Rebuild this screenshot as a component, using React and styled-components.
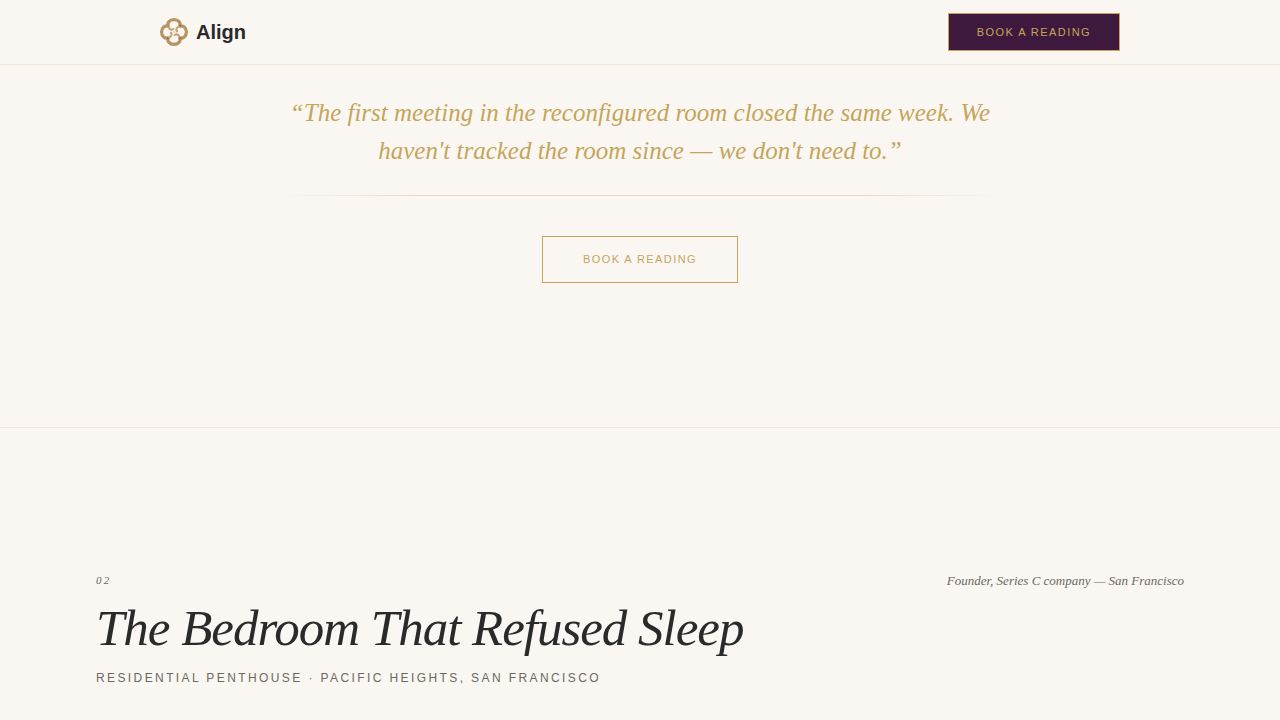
import React from "react";
import styled, { createGlobalStyle } from "styled-components";

const GlobalStyle = createGlobalStyle`
  *, *::before, *::after { box-sizing: border-box; }
  body {
    margin: 0;
    background: #faf7f2;
    color: #2a2a2a;
    font-family: "Liberation Sans", Arial, sans-serif;
  }
`;

const Header = styled.header`
  border-bottom: 1px solid #efe6d8;
`;

const HeaderInner = styled.div`
  display: flex;
  align-items: center;
  justify-content: space-between;
  max-width: 960px;
  min-height: 64px;
  margin: 0 auto;
`;

const Brand = styled.a`
  display: flex;
  align-items: center;
  gap: 8px;
  color: #2a2a2a;
  font-size: 20px;
  font-weight: 700;
  line-height: 28px;
  text-decoration: none;
`;

const BookButton = styled.button`
  padding: ${({ $solid }) => ($solid ? "12px 28px" : "16px 40px")};
  border: 1px solid #c5a55a;
  border-radius: 0;
  background: ${({ $solid }) => ($solid ? "#3d1a3d" : "transparent")};
  color: #c5a55a;
  font-family: inherit;
  font-size: 11px;
  letter-spacing: 0.13em;
  line-height: ${({ $solid }) => ($solid ? "12px" : "13px")};
  text-transform: uppercase;
  cursor: pointer;
`;

const Testimonial = styled.section`
  display: flex;
  flex-direction: column;
  align-items: center;
  padding: 29px 24px 144px;
  border-bottom: 1px solid #f3ead9;
`;

const Quote = styled.blockquote`
  max-width: 720px;
  margin: 0;
  color: #c5a55a;
  font-family: "Liberation Serif", "Times New Roman", serif;
  font-size: 25px;
  font-style: italic;
  line-height: 38px;
  text-align: center;
`;

const Rule = styled.hr`
  width: 100%;
  max-width: 720px;
  height: 1px;
  margin: 25px 0 40px;
  border: 0;
  background: linear-gradient(to right, transparent, #e8d8bc 20%, #e8d8bc 80%, transparent);
`;

const CaseStudy = styled.section`
  display: flex;
  align-items: flex-start;
  justify-content: space-between;
  gap: 32px;
  padding: 144px 96px 32px;
`;

const CaseNumber = styled.p`
  margin: 0 0 12px;
  color: #6b6862;
  font-family: "Liberation Serif", "Times New Roman", serif;
  font-size: 11px;
  font-style: italic;
  letter-spacing: 0.2em;
  line-height: 16px;
`;

const CaseTitle = styled.h2`
  margin: 0 0 14px;
  font-family: "Liberation Serif", "Times New Roman", serif;
  font-size: 51px;
  font-style: italic;
  font-weight: 400;
  letter-spacing: -0.02em;
  line-height: 56px;
`;

const CasePlace = styled.p`
  margin: 0;
  color: #6b6862;
  font-size: 12px;
  letter-spacing: 0.2em;
  line-height: 16px;
  text-transform: uppercase;
`;

const Client = styled.p`
  margin: 0;
  color: #6b6862;
  font-family: "Liberation Serif", "Times New Roman", serif;
  font-size: 13px;
  font-style: italic;
  line-height: 18px;
`;

function Logo() {
  return (
    <svg width="28" height="28" viewBox="0 0 28 28" fill="none" aria-hidden="true">
      {[0, 90, 180, 270].map((angle) => (
        <g key={angle} transform={`rotate(${angle} 14 14)`}>
          <path
            d="M8.2 9C6.7 4.6 9.8 1.6 14 1.6C18.2 1.6 21.3 4.6 19.8 9"
            stroke="#b69463"
            strokeWidth="3.2"
          />
          <path
            d="M8.3 7.6C8.7 11.2 11 12.6 13.4 11"
            stroke="#c3a57a"
            strokeWidth="2.1"
            strokeLinecap="round"
          />
          <path d="M8.5 7.1L7.1 8.5" stroke="#8b6c48" strokeWidth="1.6" />
        </g>
      ))}
      <circle cx="14" cy="14" r="1" fill="#e3cda6" />
    </svg>
  );
}

export default function App() {
  return (
    <>
      <GlobalStyle />
      <Header>
        <HeaderInner>
          <Brand href="#">
            <Logo />
            Align
          </Brand>
          <BookButton type="button" $solid>Book a Reading</BookButton>
        </HeaderInner>
      </Header>
      <main>
        <Testimonial>
          <Quote>
            “The first meeting in the reconfigured room closed the same week. We
            haven't tracked the room since — we don't need to.”
          </Quote>
          <Rule />
          <BookButton type="button">Book a Reading</BookButton>
        </Testimonial>
        <CaseStudy>
          <div>
            <CaseNumber>02</CaseNumber>
            <CaseTitle>The Bedroom That Refused Sleep</CaseTitle>
            <CasePlace>Residential Penthouse · Pacific Heights, San Francisco</CasePlace>
          </div>
          <Client>Founder, Series C company — San Francisco</Client>
        </CaseStudy>
      </main>
    </>
  );
}
